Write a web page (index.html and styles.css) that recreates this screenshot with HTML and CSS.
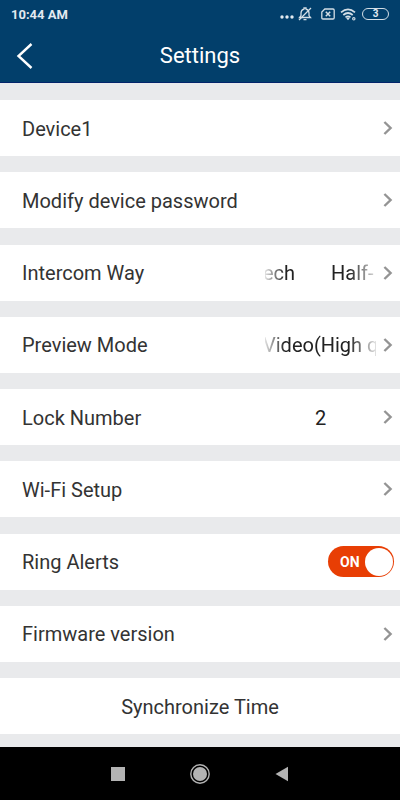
FILE: index.html
```html
<!DOCTYPE html>
<html lang="en">
<head>
<meta charset="utf-8">
<meta name="viewport" content="width=device-width, initial-scale=1">
<title>Settings</title>
<link rel="stylesheet" href="styles.css">
</head>
<body>
<svg class="defs" aria-hidden="true"><symbol id="chevron" viewBox="0 0 10 14"><path d="M1.4 1 7.6 7 1.4 13" fill="none" stroke="#949494" stroke-width="2.4"/></symbol></svg>
<header class="top">
  <div class="status">
    <span class="time">10:44 AM</span>
    <svg class="icon-dots" width="14" height="14" viewBox="0 0 14 14" fill="#e3eaf0"><circle cx="2" cy="10" r="1.7"/><circle cx="7" cy="10" r="1.7"/><circle cx="12" cy="10" r="1.7"/></svg>
    <svg class="icon-bell" width="14" height="14" viewBox="0 0 14 14" fill="none" stroke="#d3dee6" stroke-width="1.3"><path d="M1.5 10.5h11L11 8.6V6a4 4 0 0 0-3-3.9V1H6v1.1A4 4 0 0 0 3 6v2.6z"/><path d="M5.5 12.6h3M1 13 13 1"/></svg>
    <svg class="icon-sim" width="14" height="12" viewBox="0 0 14 12" fill="none" stroke="#d3dee6" stroke-width="1.3"><path d="M3.8 1H12q1.2 0 1.2 1.2v7.6Q13.2 11 12 11H2Q.8 11 .8 9.800V4z"/><path d="m4.800 3.800 4.400 4.400m0-4.400-4.400 4.400" stroke-width="1.500"/></svg>
    <svg class="icon-wifi" width="17" height="13" viewBox="0 0 17 13" fill="none" stroke="#d3dee6" stroke-width="1.7"><path d="M1 4.300Q8 -1.700 15 4.300M3.300 7Q8 3 12.700 7M5.500 9.400Q8 7.400 10.500 9.400"/><path d="m6.300 10.200 1.700 2 1.700-2q-1.700-1.200-3.400 0z" fill="#d3dee6" stroke="none"/><circle cx="13.800" cy="10.800" r="1.200" stroke-width="1.100"/></svg>
    <span class="battery">3</span>
  </div>
  <div class="titlebar">
    <button class="back" aria-label="Back"><svg width="17" height="26" viewBox="0 0 17 26" fill="none" stroke="#fff" stroke-width="2.400"><path d="M15.500 1 2.500 13l13 12"/></svg></button>
    <h1>Settings</h1>
  </div>
</header>
<main class="list">
  <button class="row"><span class="label">Device1</span><svg class="chev"><use href="#chevron"/></svg></button>
  <button class="row"><span class="label">Modify device password</span><svg class="chev"><use href="#chevron"/></svg></button>
  <button class="row"><span class="label">Intercom Way</span><span class="value marquee"><span class="track spaced"><span>ech</span><span>Half-</span></span></span><svg class="chev"><use href="#chevron"/></svg></button>
  <button class="row"><span class="label">Preview Mode</span><span class="value marquee"><span class="track">Video(High q</span></span><svg class="chev"><use href="#chevron"/></svg></button>
  <button class="row"><span class="label">Lock Number</span><span class="value">2</span><svg class="chev"><use href="#chevron"/></svg></button>
  <button class="row"><span class="label">Wi-Fi Setup</span><svg class="chev"><use href="#chevron"/></svg></button>
  <label class="row" for="ring"><span class="label">Ring Alerts</span><span class="switch"><input type="checkbox" id="ring" checked><span class="on">ON</span><span class="knob"></span></span></label>
  <button class="row"><span class="label">Firmware version</span><svg class="chev"><use href="#chevron"/></svg></button>
  <button class="row centered">Synchronize Time</button>
</main>
<nav class="navbar">
  <button aria-label="Recent apps"><svg width="20" height="20" viewBox="0 0 20 20"><path d="M3 3h14v14H3z" fill="#b3b3b3"/></svg></button>
  <button aria-label="Home"><svg width="20" height="20" viewBox="0 0 20 20"><circle cx="10" cy="10" r="9.200" fill="none" stroke="#b3b3b3" stroke-width="1.400"/><circle cx="10" cy="10" r="7" fill="#b3b3b3"/></svg></button>
  <button aria-label="Back to previous"><svg width="20" height="20" viewBox="0 0 20 20"><path d="M3.500 10 16 2.700v14.600z" fill="#b3b3b3"/></svg></button>
</nav>
</body>
</html>
```
FILE: styles.css
```css
* { box-sizing: border-box; }
body {
  margin: 0;
  min-height: 100vh;
  display: flex;
  flex-direction: column;
  background: #e9eaec;
  color: #333;
  font-family: Roboto, "Liberation Sans", sans-serif;
}
button {
  border: 0;
  padding: 0;
  background: none;
  color: inherit;
  font: inherit;
}
svg { display: block; flex: none; }
.defs { position: absolute; width: 0; height: 0; }

.top {
  background: #023f6b;
  border-bottom: 1px solid #02246a;
  color: #fff;
}
.status {
  display: flex;
  align-items: center;
  height: 28px;
  padding: 0 11px;
  color: #e3eaf0;
}
.time {
  margin-right: auto;
  font-size: 13px;
  font-weight: 700;
}
.icon-bell { margin-left: 4px; }
.icon-sim { margin-left: 9px; }
.icon-wifi { margin-left: 5px; }
.battery {
  width: 27px;
  height: 12px;
  margin-left: 5px;
  border: 1px solid #d3dee6;
  border-radius: 6px;
  font-size: 10px;
  font-weight: 700;
  line-height: 10px;
  text-align: center;
}
.titlebar {
  display: grid;
  grid-template-columns: 48px 1fr 48px;
  align-items: center;
  height: 54px;
  padding-top: 2px;
}
.back { padding-left: 16px; }
h1 {
  margin: 0;
  font-size: 22px;
  font-weight: 400;
  line-height: 28px;
  text-align: center;
}

.list {
  flex: 1;
  display: flex;
  flex-direction: column;
  justify-content: space-between;
  gap: 16px;
  padding: 17px 0 13px;
}
.row {
  display: flex;
  align-items: center;
  width: 100%;
  height: 56px;
  padding: 0 6px 0 22px;
  background: #fff;
  font-size: 20px;
  line-height: 24px;
  text-align: left;
}
.label { margin-right: auto; padding-top: 1px; }
.centered { justify-content: center; padding: 1px 22px 0; }
.value {
  width: 111px;
  margin-right: 7px;
  padding-top: 1px;
  color: #222;
  text-align: center;
}
.marquee {
  overflow: hidden;
  white-space: nowrap;
  text-align: left;
  -webkit-mask-image: linear-gradient(90deg, #0002, #000 20px, #000 84px, #0002);
  mask-image: linear-gradient(90deg, #0002, #000 20px, #000 84px, #0002);
}
.track { display: flex; margin-left: -2px; }
.spaced { gap: 36px; }
.chev { width: 10px; height: 14px; margin-right: 1px; }

.switch {
  position: relative;
  display: flex;
  align-items: center;
  justify-content: space-between;
  width: 66px;
  height: 31px;
  padding: 0 1px 0 12px;
  border-radius: 16px;
  background: #e83e04;
  color: #fff;
}
.switch input {
  position: absolute;
  inset: 0;
  width: 100%;
  height: 100%;
  margin: 0;
  opacity: 0;
}
.on { font-size: 14px; font-weight: 700; }
.knob {
  width: 28px;
  height: 28px;
  border-radius: 50%;
  background: #fff;
}

.navbar {
  display: grid;
  grid-template-columns: repeat(3, 82px);
  justify-content: center;
  height: 53px;
  background: #000;
}
.navbar button { display: grid; place-items: center; }
```
